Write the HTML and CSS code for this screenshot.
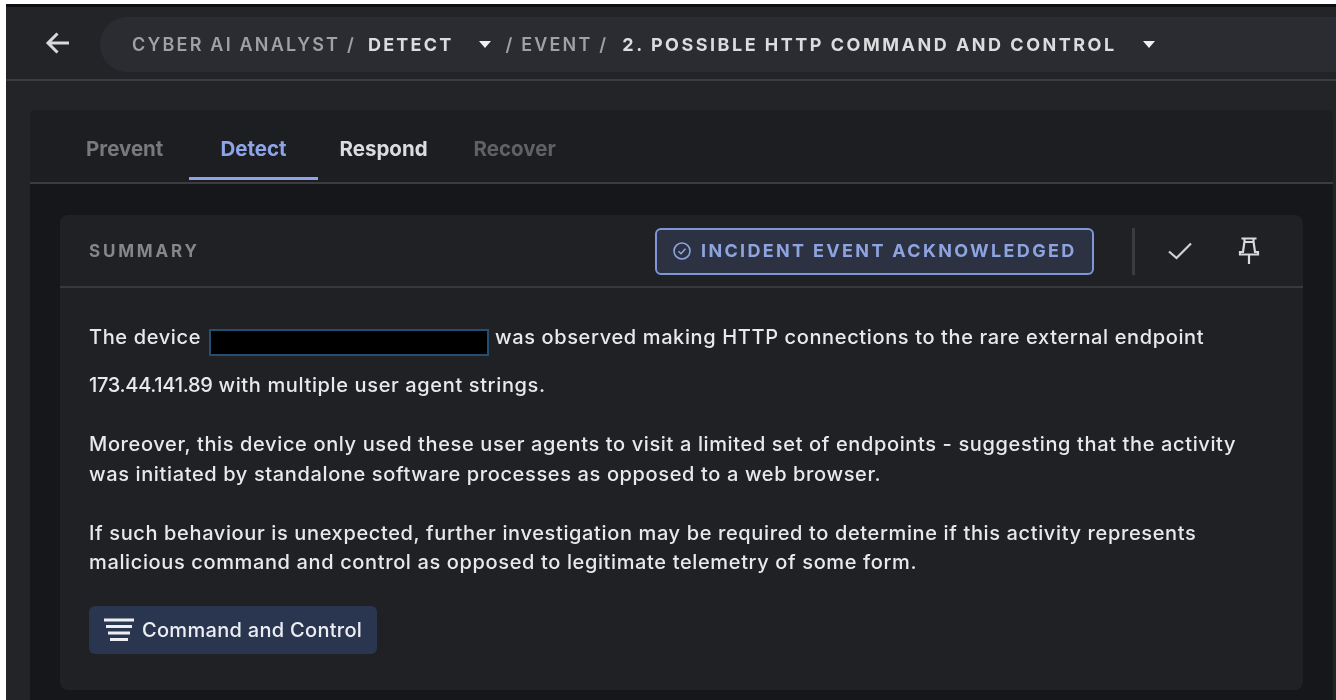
FILE: index.html
```html
<!DOCTYPE html>
<html lang="en">
<head>
    <meta charset="UTF-8">
    <title>Cyber AI Analyst</title>
    <link rel="stylesheet" href="styles.css">
</head>
<body>
    <div class="app">
        <header class="topbar">
            <svg class="back-icon" width="26" height="24" viewBox="0 0 26 24" fill="none" stroke="#d8d9da" stroke-width="3">
                <path d="M24 12H3M12.5 2.500L3 12l9.500 9.500"/>
            </svg>
            <nav class="crumbs">
                <span>CYBER AI ANALYST /</span>
                <b class="detect">DETECT</b>
                <i class="caret first"></i>
                <span>/ EVENT /</span>
                <b>2. POSSIBLE HTTP COMMAND AND CONTROL</b>
                <i class="caret second"></i>
            </nav>
        </header>
        <main class="panel">
            <div class="tabs">
                <div class="tab prevent">Prevent</div>
                <div class="tab active">Detect</div>
                <div class="tab respond">Respond</div>
                <div class="tab recover">Recover</div>
            </div>
            <div class="panel-body">
                <section class="card">
                    <div class="card-head">
                        <h2>SUMMARY</h2>
                        <div class="ack">
                            <svg width="20" height="20" viewBox="0 0 20 20" fill="none" stroke="#8ea4e0" stroke-width="1.600">
                                <circle cx="10" cy="10" r="8"/>
                                <path d="M6.500 10.200l2.500 2.500 4.500-5"/>
                            </svg>
                            INCIDENT EVENT ACKNOWLEDGED
                        </div>
                        <div class="sep"></div>
                        <svg class="check" width="24" height="18" viewBox="0 0 24 18" fill="none" stroke="#d0d1d2" stroke-width="2.200">
                            <path d="M1 9.500l7.500 6.500L23 1.500"/>
                        </svg>
                        <svg class="pin" width="22" height="28" viewBox="0 0 22 28" fill="none" stroke="#d8d9da" stroke-width="2.200">
                            <path d="M3.500 1.500h15M6.500 1.500v3L5 15H2v2.500h18V15h-3L15.500 4.500v-3M11 17.500V27M7 5h8"/>
                        </svg>
                    </div>
                    <div class="card-text">
                        The device <span class="redacted"></span> was observed making HTTP connections to the rare external endpoint<br>
                        <span class="tall"><span class="ip">173.44.141.89</span> with multiple user agent strings.</span><br>
                        <br>
                        Moreover, this device only used these user agents to visit a limited set of endpoints - suggesting that the activity<br>
                        was initiated by standalone software processes as opposed to a web browser.<br>
                        <br>
                        If such behaviour is unexpected, further investigation may be required to determine if this activity represents<br>
                        malicious command and control as opposed to legitimate telemetry of some form.
                    </div>
                    <div class="tag">
                        <svg width="30" height="24" viewBox="0 0 30 24" fill="none" stroke="#eceef2" stroke-width="3">
                            <path d="M0 2h30M2 8.500h26M4 15h22M6 21.500h18"/>
                        </svg>
                        Command and Control
                    </div>
                </section>
            </div>
        </main>
    </div>
</body>
</html>
```

FILE: styles.css
```css
html, body {
    height: 100%;
}
body {
    margin: 0;
    background: #fff;
    font-family: Inter, "Liberation Sans", sans-serif;
    overflow: hidden;
}
.app {
    margin: 4px 0 0 6px;
    height: 696px;
    background: #222428;
    border-top: 3px solid #0e0f10;
    box-sizing: border-box;
    overflow: hidden;
    filter: blur(0.4px);
}
.topbar {
    display: flex;
    align-items: center;
    height: 74px;
    padding-left: 39px;
    border-bottom: 2px solid #3a3c40;
    box-sizing: border-box;
}
.back-icon {
    margin-right: 29px;
}
.crumbs {
    flex: 1;
    display: flex;
    align-items: center;
    height: 55px;
    margin-top: 2px;
    padding-left: 32px;
    background: #2a2c31;
    border-radius: 28px 0 0 28px;
    font-size: 18px;
    font-weight: 600;
    letter-spacing: 2.2px;
    color: #a0a1a4;
    white-space: nowrap;
}
.crumbs b {
    margin-left: 14px;
    font-weight: 700;
    letter-spacing: 2.5px;
    color: #dcdcde;
}
.crumbs .detect {
    margin-left: 12px;
    letter-spacing: 2.2px;
}
.caret {
    width: 0;
    height: 0;
    border-left: 6px solid transparent;
    border-right: 6px solid transparent;
    border-top: 7px solid #f0f0f0;
}
.caret.first {
    margin: 0 14px 0 26px;
}
.caret.second {
    margin-left: 26px;
}
.panel {
    margin: 29px 3px 0 24px;
    background: #1c1e21;
    border-radius: 6px 6px 0 0;
}
.tabs {
    display: flex;
    height: 72px;
    padding-left: 33px;
    border-bottom: 2px solid #3a3c40;
}
.tab {
    padding: 26px 23px 0;
    margin-bottom: 2px;
    font-size: 20.5px;
    font-weight: 700;
    color: #dcdcde;
}
.tab.prevent {
    color: #77797c;
}
.tab.recover {
    color: #5f6164;
}
.tab.active {
    margin-left: 3px;
    padding: 26px 31px 0;
    color: #8ea4e8;
    border-bottom: 3px solid #8ea4e8;
}
.tab.respond {
    padding-left: 22px;
}
.panel-body {
    height: 520px;
    padding: 31px 30px 0;
    background: #15171a;
    box-sizing: border-box;
}
.card {
    height: 475px;
    background: #1f2125;
    border-radius: 8px;
}
.card-head {
    display: flex;
    align-items: center;
    height: 73px;
    padding: 0 43px 0 29px;
    border-bottom: 2px solid #38393d;
    box-sizing: border-box;
}
.card-head h2 {
    flex: 1;
    margin: 0;
    font-size: 17px;
    font-weight: 700;
    letter-spacing: 2.8px;
    color: #85878a;
}
.ack {
    display: flex;
    align-items: center;
    gap: 9px;
    width: 439px;
    height: 47px;
    margin-top: 2px;
    padding: 0 0 2px 15px;
    background: #2d3242;
    border: 2px solid #7f97d6;
    border-radius: 6px;
    box-sizing: border-box;
    font-size: 18px;
    font-weight: 700;
    letter-spacing: 2.33px;
    color: #8ea4e0;
    white-space: nowrap;
}
.sep {
    width: 3px;
    height: 47px;
    margin: 2px 33px 0 38px;
    background: #3a3c40;
}
.pin {
    margin-left: 46px;
}
.card-text {
    padding: 35px 29px 0;
    font-size: 20px;
    font-weight: 500;
    letter-spacing: 0.63px;
    line-height: 29.5px;
    color: #e8e9ea;
    white-space: nowrap;
}
.redacted {
    display: inline-block;
    width: 280px;
    height: 27px;
    margin-left: 2px;
    background: #000;
    border: 2px solid #235070;
    box-sizing: border-box;
    vertical-align: -12px;
}
.tall {
    display: inline-block;
    margin-top: 15px;
}
.ip {
    letter-spacing: -0.3px;
}
.tag {
    display: inline-flex;
    align-items: center;
    gap: 8px;
    width: 288px;
    height: 48px;
    margin: 28px 0 0 29px;
    padding-left: 15px;
    background: #2a3650;
    border-radius: 6px;
    box-sizing: border-box;
    font-size: 20px;
    font-weight: 500;
    letter-spacing: 0.3px;
    color: #eceef2;
    white-space: nowrap;
}
```
